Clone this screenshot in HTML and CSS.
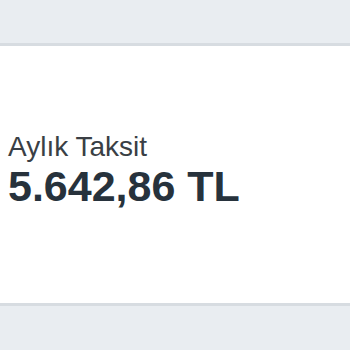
FILE: index.html
```html
<!DOCTYPE html>
<html lang="tr">
<head>
    <meta charset="UTF-8">
    <meta name="viewport" content="width=device-width, initial-scale=1.0">
    <title>Aylık Taksit</title>
    <link rel="stylesheet" href="styles.css">
</head>
<body>
    <div class="topBar"></div>
    <main class="summary">
        <div class="installment">
            <p class="label">Aylık Taksit</p>
            <p class="amount">5.642,86 TL</p>
        </div>
    </main>
    <div class="bottomBar"></div>
</body>
</html>
```

FILE: styles.css
```css
* {
    box-sizing: border-box;
    padding: 0;
    margin: 0;
}

html {
    font-family: "Liberation Sans", Arial, sans-serif;
}

body {
    background-color: #e9edf1;
    width: 350px;
    height: 350px;
    overflow: hidden;
}

.topBar {
    height: 46px;
    background-color: #e9edf1;
    border-bottom: 3px solid #d7dce1;
}

.summary {
    height: 260px;
    background-color: #ffffff;
    border-bottom: 3px solid #d7dce1;
    display: flex;
    align-items: center;
    padding: 0 8px 10px;
}

.installment {
    display: flex;
    flex-direction: column;
}

.label {
    font-size: 28px;
    line-height: 32px;
    color: #3a3f45;
}

.amount {
    font-size: 43px;
    font-weight: bold;
    line-height: 46px;
    color: #27323c;
}
```
